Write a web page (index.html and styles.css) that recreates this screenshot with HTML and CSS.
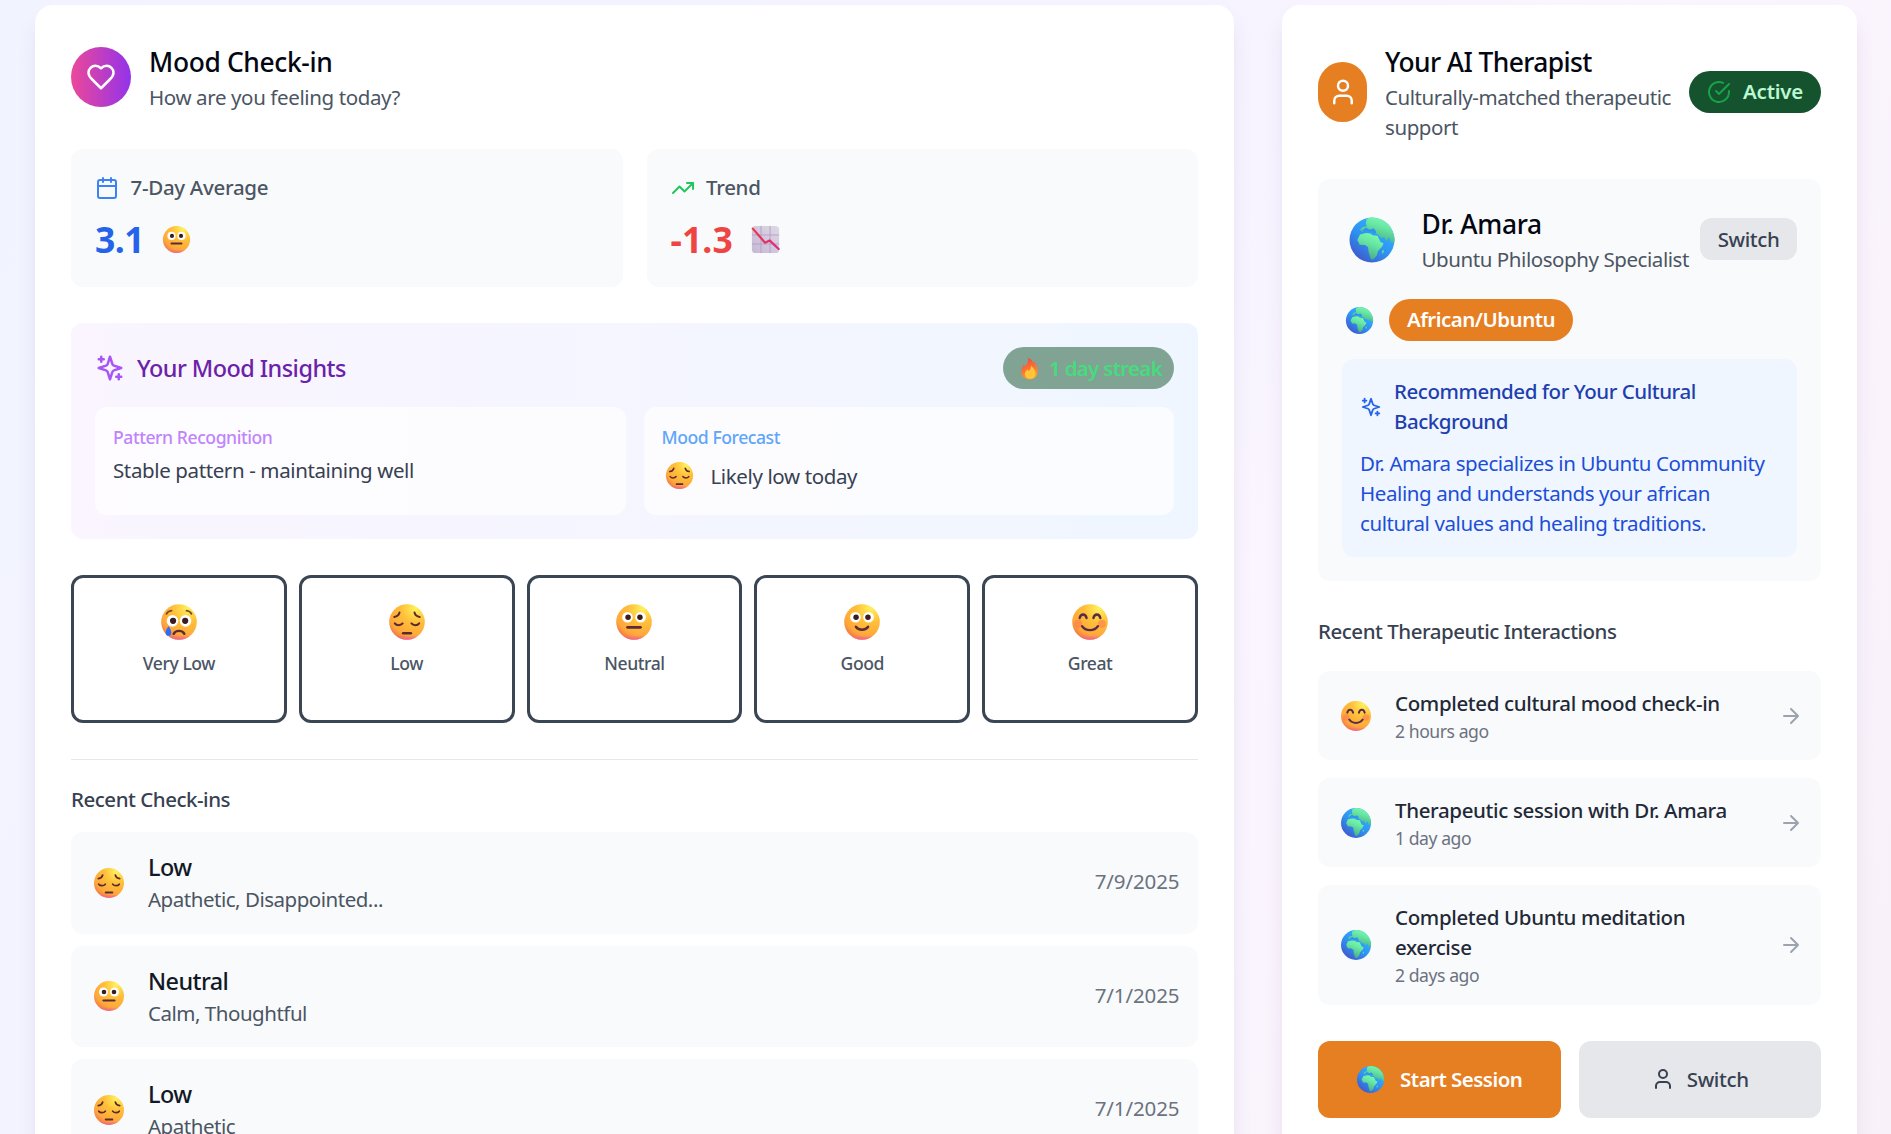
FILE: index.html
```html
<!DOCTYPE html>
<html lang="en">
<head>
<meta charset="utf-8">
<title>Mood Check-in</title>
<link rel="stylesheet" href="styles.css">
</head>
<body>
<svg class="defs" aria-hidden="true">
  <defs>
    <radialGradient id="skin" cx=".74" cy=".12" r=".98">
      <stop offset="0" stop-color="#fff15c"/><stop offset=".4" stop-color="#ffc03a"/><stop offset=".8" stop-color="#ffa63a"/><stop offset="1" stop-color="#ee6f4a"/>
    </radialGradient>
    <linearGradient id="chin" x1="0" y1="0" x2="0" y2="1">
      <stop offset=".87" stop-color="#f0609e" stop-opacity="0"/><stop offset="1" stop-color="#f0609e" stop-opacity=".85"/>
    </linearGradient>
    <linearGradient id="sea" x1=".85" y1=".2" x2=".25" y2="1">
      <stop offset="0" stop-color="#2fb4ff"/><stop offset=".5" stop-color="#2f92f2"/><stop offset="1" stop-color="#3f58cc"/>
    </linearGradient>
    <linearGradient id="land" x1=".8" y1="0" x2=".4" y2="1">
      <stop offset="0" stop-color="#7dffab"/><stop offset=".4" stop-color="#68e8a4"/><stop offset="1" stop-color="#45a886"/>
    </linearGradient>
    <linearGradient id="flame" x1=".3" y1="0" x2=".6" y2="1">
      <stop offset="0" stop-color="#f4453c"/><stop offset=".6" stop-color="#fb7b35"/><stop offset="1" stop-color="#ff9d35"/>
    </linearGradient>
    <linearGradient id="paper" x1="1" y1="0" x2="0" y2="1">
      <stop offset="0" stop-color="#dfd8e6"/><stop offset="1" stop-color="#c6b8d6"/>
    </linearGradient>
    <linearGradient id="fall" x1="0" y1="0" x2="1" y2="1">
      <stop offset="0" stop-color="#f0384a"/><stop offset="1" stop-color="#dd2a80"/>
    </linearGradient>
    <clipPath id="globe-clip"><circle cx="16" cy="16" r="15"/></clipPath>
  </defs>
  <symbol id="face" viewBox="0 0 32 32"><circle cx="16" cy="16" r="15" fill="url(#skin)"/><circle cx="16" cy="16" r="15" fill="url(#chin)"/></symbol>
  <symbol id="e-low" viewBox="0 0 32 32">
    <use href="#face"/>
    <g fill="none" stroke="#5a2b2e" stroke-width="1.7" stroke-linecap="round"><path d="M5.300 11.700c2.400-.3 3.900-1.700 4.400-3.700M26.700 11.700c-2.400-.3-3.900-1.700-4.400-3.700M5.700 17.200c1.500 2 5 2 6.600 0M19.700 17.200c1.600 2 5.100 2 6.600 0"/><path d="M12.700 25.500h6.600" stroke-width="2"/></g>
  </symbol>
  <symbol id="e-neutral" viewBox="0 0 32 32">
    <use href="#face"/>
    <circle cx="10.500" cy="12" r="4.500" fill="#fff"/><circle cx="21.500" cy="12" r="4.500" fill="#fff"/>
    <circle cx="11" cy="12" r="2.300" fill="#3a1b22"/><circle cx="21" cy="12" r="2.300" fill="#3a1b22"/>
    <path d="M10.500 20.500h11" stroke="#5a2b38" stroke-width="2.200" stroke-linecap="round"/>
  </symbol>
  <symbol id="e-good" viewBox="0 0 32 32">
    <use href="#face"/>
    <circle cx="10.500" cy="12" r="4.500" fill="#fff"/><circle cx="21.500" cy="12" r="4.500" fill="#fff"/>
    <circle cx="11" cy="12" r="2.300" fill="#3a1b22"/><circle cx="21" cy="12" r="2.300" fill="#3a1b22"/>
    <path d="M10.800 20c2.200 3.300 8.200 3.300 10.400 0" fill="none" stroke="#5a2b38" stroke-width="2" stroke-linecap="round"/>
  </symbol>
  <symbol id="e-great" viewBox="0 0 32 32">
    <use href="#face"/>
    <circle cx="6" cy="17.500" r="3.300" fill="#fb6f56" opacity=".5"/><circle cx="26" cy="17.500" r="3.300" fill="#fb6f56" opacity=".5"/>
    <path d="M7.300 12.700c.8-4 5-4 5.800 0M18.900 12.700c.8-4 5-4 5.800 0M9.300 19.500c3 4.500 10.400 4.500 13.400 0" fill="none" stroke="#5a2b48" stroke-width="2" stroke-linecap="round"/>
  </symbol>
  <symbol id="e-cry" viewBox="0 0 32 32">
    <use href="#face"/>
    <circle cx="10.500" cy="15" r="4.900" fill="#fff"/><circle cx="21.500" cy="15" r="4.900" fill="#fff"/>
    <circle cx="11" cy="15" r="2.600" fill="#3a1b22"/><circle cx="21.200" cy="15" r="2.600" fill="#3a1b22"/>
    <path d="M5.500 9.200c.8-1.600 2.300-2.500 4.200-2.700M26.500 9.200c-.8-1.600-2.300-2.500-4.200-2.700" fill="none" stroke="#7a4a2e" stroke-width="1.500" stroke-linecap="round"/>
    <path d="M11.500 26c1.600-3.300 7.400-3.300 9 0" fill="none" stroke="#5a2b38" stroke-width="2" stroke-linecap="round"/>
    <path d="M7.200 19.500c1.500 2 2.300 3.700 2.300 5.500a2.400 2.600 0 0 1-4.800 0c0-1.800 1-3.500 2.500-5.500z" fill="#2f6cf5"/>
  </symbol>
  <symbol id="e-globe" viewBox="0 0 32 32">
    <circle cx="16" cy="16" r="15" fill="url(#sea)"/>
    <g clip-path="url(#globe-clip)" fill="url(#land)">
      <path d="M12.500 2 17 0l7 1.200 5 4.800 3 6v6l-3.300-.5-1.300-3.300-1.700 2.600-1.700-2.600-2 .4-2.200-2.500-3.300-.9-.5-1.700-2.500-.3-1.500 1.300-2.500-.2L8 9.300l1.500-1.800 3-.7-.6-2z"/>
      <path d="M8 12.300 12 11.400l3 .3 1.500 1.200 3.200.3 2 4.200 2 .8-.9 2.200-2.800 3-.8 3-2.400 2.600-1.600-.2-1.500-5-.3-3-2-1.400-3.600-.2L6.200 16z"/>
      <path d="M22.700 23.300l1.100-.8-.2 2.300-1.100.8z"/>
    </g>
    <path d="M9.500 9.500l2.500-1.800 2.500 1.500 2.500-1 1.500 1.700.3 1.800-2-.3-.8-1.200-1.400.7-2.500-.7-1 .9z" fill="#2f93f0"/>
  </symbol>
  <symbol id="e-fire" viewBox="0 0 32 32">
    <path d="M14 1c5 2 6.500 5 7.300 8 .6-1 .8-1.800.8-3 4 4 5.400 9.500 5.400 14 0 6.500-4.500 11-11.300 11S4.500 26.500 4.500 20.500C4.500 16 7 14 8 10c1 .8 1.500 1.800 1.700 3C13 10 15 6 14 1z" fill="url(#flame)"/>
    <path d="M18 12c4.500 4 6.500 7 6.500 11 0 4.500-3 7.300-7.500 7.300S9.500 27.500 9.500 24c0-3.500 2.500-4.500 3.500-7 .8.700 1.200 1.500 1.400 2.500C17 18 18.300 15.500 18 12z" fill="#ffc637"/>
  </symbol>
  <symbol id="e-chart" viewBox="0 0 32 32">
    <rect x="1" y="1" width="30" height="30" rx="4" fill="url(#paper)"/>
    <path d="M11 1v30M21 1v30M1 11h30M1 21h30" stroke="#b0a2c2" stroke-width="1"/>
    <path d="M2 4l13.500 15.500 5-2.500L30.500 26.500" fill="none" stroke="url(#fall)" stroke-width="2.500" stroke-linecap="round" stroke-linejoin="round"/>
  </symbol>
  <symbol id="i-heart" viewBox="0 0 24 24"><path d="M19 14c1.490-1.460 3-3.210 3-5.500A5.500 5.500 0 0 0 16.500 3c-1.760 0-3 .5-4.500 2-1.500-1.500-2.740-2-4.500-2A5.500 5.500 0 0 0 2 8.500c0 2.300 1.500 4.050 3 5.500l7 7Z"/></symbol>
  <symbol id="i-calendar" viewBox="0 0 24 24"><rect x="3" y="4" width="18" height="18" rx="2"/><path d="M8 2v4M16 2v4M3 10h18"/></symbol>
  <symbol id="i-trend" viewBox="0 0 24 24"><path d="M22 7l-8.500 8.500-5-5L2 17"/><path d="M16 7h6v6"/></symbol>
  <symbol id="i-sparkles" viewBox="0 0 24 24"><path d="m12 3-1.912 5.813a2 2 0 0 1-1.275 1.275L3 12l5.813 1.912a2 2 0 0 1 1.275 1.275L12 21l1.912-5.813a2 2 0 0 1 1.275-1.275L21 12l-5.813-1.912a2 2 0 0 1-1.275-1.275L12 3Z"/><path d="M5 3v4M19 17v4M3 5h4M17 19h4"/></symbol>
  <symbol id="i-user" viewBox="0 0 24 24"><path d="M19 21v-2a4 4 0 0 0-4-4H9a4 4 0 0 0-4 4v2"/><circle cx="12" cy="7" r="4"/></symbol>
  <symbol id="i-check" viewBox="0 0 24 24"><path d="M22 11.080V12a10 10 0 1 1-5.930-9.140"/><path d="M22 4 12 14.010l-3-3"/></symbol>
  <symbol id="i-arrow" viewBox="0 0 24 24"><path d="M5 12h14M12 5l7 7-7 7"/></symbol>
</svg>

<main class="board">
  <section class="card">
    <header class="card-head">
      <span class="avatar avatar-mood"><svg class="icon icon-lg"><use href="#i-heart"/></svg></span>
      <div class="head-text">
        <h2 class="title">Mood Check-in</h2>
        <p class="subtitle">How are you feeling today?</p>
      </div>
    </header>

    <div class="stats">
      <div class="stat">
        <div class="stat-label"><svg class="icon blue"><use href="#i-calendar"/></svg>7-Day Average</div>
        <div class="stat-value value-blue"><span>3.1</span><svg class="emoji emoji-md"><use href="#e-neutral"/></svg></div>
      </div>
      <div class="stat">
        <div class="stat-label"><svg class="icon green"><use href="#i-trend"/></svg>Trend</div>
        <div class="stat-value value-red"><span>-1.3</span><svg class="emoji emoji-md"><use href="#e-chart"/></svg></div>
      </div>
    </div>

    <div class="insights">
      <div class="insights-head">
        <h3 class="insights-title"><svg class="icon icon-lg violet"><use href="#i-sparkles"/></svg>Your Mood Insights</h3>
        <span class="streak"><svg class="emoji emoji-fire"><use href="#e-fire"/></svg>1 day streak</span>
      </div>
      <div class="insight-grid">
        <div class="insight">
          <div class="insight-label lilac">Pattern Recognition</div>
          <div class="insight-text">Stable pattern - maintaining well</div>
        </div>
        <div class="insight">
          <div class="insight-label sky">Mood Forecast</div>
          <div class="insight-text forecast"><svg class="emoji emoji-md"><use href="#e-low"/></svg>Likely low today</div>
        </div>
      </div>
    </div>

    <div class="moods">
      <button class="mood"><svg class="emoji emoji-lg"><use href="#e-cry"/></svg>Very Low</button>
      <button class="mood"><svg class="emoji emoji-lg"><use href="#e-low"/></svg>Low</button>
      <button class="mood"><svg class="emoji emoji-lg"><use href="#e-neutral"/></svg>Neutral</button>
      <button class="mood"><svg class="emoji emoji-lg"><use href="#e-good"/></svg>Good</button>
      <button class="mood"><svg class="emoji emoji-lg"><use href="#e-great"/></svg>Great</button>
    </div>

    <div class="history">
      <h3 class="section-title">Recent Check-ins</h3>
      <ul class="entries">
        <li class="entry"><svg class="emoji emoji-row"><use href="#e-low"/></svg><div class="entry-body"><div class="entry-name">Low</div><div class="entry-note">Apathetic, Disappointed...</div></div><time class="entry-date">7/9/2025</time></li>
        <li class="entry"><svg class="emoji emoji-row"><use href="#e-neutral"/></svg><div class="entry-body"><div class="entry-name">Neutral</div><div class="entry-note">Calm, Thoughtful</div></div><time class="entry-date">7/1/2025</time></li>
        <li class="entry"><svg class="emoji emoji-row"><use href="#e-low"/></svg><div class="entry-body"><div class="entry-name">Low</div><div class="entry-note">Apathetic</div></div><time class="entry-date">7/1/2025</time></li>
      </ul>
    </div>
  </section>

  <section class="card">
    <header class="card-head">
      <span class="avatar avatar-therapist"><svg class="icon icon-lg"><use href="#i-user"/></svg></span>
      <div class="head-text">
        <h2 class="title title-therapist">Your AI Therapist</h2>
        <p class="subtitle tight">Culturally-matched therapeutic support</p>
      </div>
      <span class="active"><svg class="icon"><use href="#i-check"/></svg><span class="lift">Active</span></span>
    </header>

    <div class="therapist">
      <div class="doctor">
        <svg class="emoji emoji-xl"><use href="#e-globe"/></svg>
        <div class="head-text">
          <h3 class="title">Dr. Amara</h3>
          <p class="subtitle tight">Ubuntu Philosophy Specialist</p>
        </div>
        <button class="switch-sm">Switch</button>
      </div>
      <div class="culture"><svg class="emoji emoji-md"><use href="#e-globe"/></svg><span class="culture-tag">African/Ubuntu</span></div>
      <div class="recommend">
        <div class="recommend-head"><svg class="icon icon-sm"><use href="#i-sparkles"/></svg><span class="lift">Recommended for Your Cultural Background</span></div>
        <p class="recommend-text">Dr. Amara specializes in Ubuntu Community Healing and understands your african cultural values and healing traditions.</p>
      </div>
    </div>

    <h3 class="section-title interactions-title">Recent Therapeutic Interactions</h3>
    <ul class="interactions">
      <li class="interaction"><svg class="emoji emoji-row"><use href="#e-great"/></svg><div class="interaction-body"><div class="interaction-name">Completed cultural mood check-in</div><div class="interaction-time">2 hours ago</div></div><svg class="icon grey"><use href="#i-arrow"/></svg></li>
      <li class="interaction"><svg class="emoji emoji-row"><use href="#e-globe"/></svg><div class="interaction-body"><div class="interaction-name">Therapeutic session with Dr. Amara</div><div class="interaction-time">1 day ago</div></div><svg class="icon grey"><use href="#i-arrow"/></svg></li>
      <li class="interaction"><svg class="emoji emoji-row"><use href="#e-globe"/></svg><div class="interaction-body"><div class="interaction-name">Completed Ubuntu meditation exercise</div><div class="interaction-time">2 days ago</div></div><svg class="icon grey"><use href="#i-arrow"/></svg></li>
    </ul>

    <div class="actions">
      <button class="action action-start"><svg class="emoji emoji-md"><use href="#e-globe"/></svg>Start Session</button>
      <button class="action action-switch"><svg class="icon"><use href="#i-user"/></svg>Switch</button>
    </div>
  </section>
</main>
</body>
</html>
```
FILE: styles.css
```css
* { box-sizing: border-box; margin: 0; padding: 0; }

body {
  height: 1134px;
  overflow: hidden;
  font: 400 20.5px/30px "Noto Sans", "Open Sans", sans-serif;
  letter-spacing: -0.38px;
  color: #374151;
  background: linear-gradient(120deg, #f1f4ff 0%, #f5f3ff 45%, #faf5ff 62%, #f9f1f9 100%);
}

button { font: inherit; letter-spacing: inherit; color: inherit; border: 0; }
ul { list-style: none; }
.defs { position: absolute; width: 0; height: 0; }

.board {
  display: grid;
  grid-template-columns: 1199px 575px;
  gap: 48px;
  height: 1134px;
  overflow: hidden;
  padding: 5px 34px 0 35px;
}

.card {
  height: 1260px;
  padding: 36px;
  border-radius: 18px;
  background: #fff;
  box-shadow: 0 15px 23px -4px rgba(60, 30, 110, .1), 0 6px 9px -6px rgba(60, 30, 110, .1);
}

/* icons */
.icon {
  flex: none;
  width: 24px;
  height: 24px;
  fill: none;
  stroke: currentColor;
  stroke-width: 2;
  stroke-linecap: round;
  stroke-linejoin: round;
}
.icon-lg { width: 30px; height: 30px; }
.icon-sm { width: 22px; height: 24px; }
.blue { color: #3b82f6; }
.green { color: #22c55e; }
.violet { color: #a855f7; }
.grey { color: #9ca3af; }

.emoji { flex: none; display: block; }
.emoji-md { width: 29px; height: 29px; }
.emoji-row { width: 32px; height: 32px; }
.emoji-lg { width: 38px; height: 38px; }
.emoji-xl { width: 48px; height: 48px; }
.emoji-fire { width: 23px; height: 23px; }

.lift { margin: -1px 0 1px; }

/* card header */
.card-head { display: flex; align-items: center; gap: 18px; margin-bottom: 36px; }
.head-text { flex: 1; min-width: 0; }
.title { font-size: 26.4px; line-height: 42px; font-weight: 550; letter-spacing: -0.35px; color: #030712; }
.title-therapist { letter-spacing: -0.6px; }
.subtitle { margin: -1px 0 1px; color: #4b5563; }
.tight { letter-spacing: -0.43px; }

.avatar { display: flex; align-items: center; justify-content: center; flex: none; width: 60px; height: 60px; border-radius: 30px; color: #fff; }
.avatar-mood { background: linear-gradient(90deg, #ec4899, #9333ea); }
.avatar-therapist { width: 49px; background: #e67e22; }

.active {
  display: flex;
  align-items: center;
  gap: 12px;
  height: 42px;
  padding: 0 18px;
  border-radius: 21px;
  background: #14532d;
  color: #bbf7d0;
  font-weight: 600;
  letter-spacing: -0.25px;
}
.active .icon { color: #16a34a; }

/* stats */
.stats { display: grid; grid-template-columns: 1fr 1fr; gap: 24px; }
.stat { padding: 24px; border-radius: 12px; background: #f9fafb; }
.stat-label { display: flex; align-items: center; gap: 11.5px; margin-bottom: 12px; font-weight: 550; letter-spacing: -0.3px; line-height: 29px; padding-bottom: 1px; color: #4b5563; }
.stat-value { display: flex; align-items: center; gap: 18px; height: 48px; font-size: 35.5px; line-height: 48px; font-weight: 700; letter-spacing: -0.5px; }
.stat-value .emoji { margin-top: 1px; }
.value-blue { color: #2563eb; }
.value-red { color: #ef4444; letter-spacing: 0.1px; }

/* insights */
.insights { margin-top: 36px; padding: 24px 24px 24.5px; border-radius: 12px; background: linear-gradient(90deg, #faf5ff, #eff6ff); }
.insights-head { display: flex; align-items: center; justify-content: space-between; margin-bottom: 18px; }
.insights-title { display: flex; align-items: center; gap: 12px; font-size: 23.4px; line-height: 36px; font-weight: 550; letter-spacing: -0.52px; color: #6b21a8; }
.streak { display: flex; align-items: center; gap: 8px; height: 42px; padding: 0 12px 0 15px; border-radius: 21px; background: #80a394; color: #46dc7d; font-weight: 600; line-height: 40px; letter-spacing: -0.7px; }
.insight-grid { display: grid; grid-template-columns: 1fr 1fr; gap: 18px; }
.insight { height: 107.5px; padding: 18px; border-radius: 12px; background: rgba(255, 255, 255, .7); }
.insight-label { margin-bottom: 5.5px; font-size: 17.6px; line-height: 24px; font-weight: 550; letter-spacing: -0.45px; }
.lilac { color: #c084fc; }
.sky { color: #60a5fa; }
.forecast { display: flex; align-items: center; gap: 17px; height: 42px; padding-left: 3px; }

/* mood buttons */
.moods { display: grid; grid-template-columns: repeat(5, 1fr); gap: 12px; margin-top: 36px; }
.mood {
  display: flex;
  flex-direction: column;
  align-items: center;
  gap: 9.5px;
  height: 148px;
  padding-top: 25px;
  border: 3px solid #3b4655;
  border-radius: 12px;
  background: #fff;
  color: #4b5563;
  font-size: 17.6px;
  line-height: 24px;
  font-weight: 550;
  letter-spacing: -0.45px;
}

/* history */
.history { margin-top: 36px; padding-top: 24px; border-top: 1.5px solid #e5e7eb; }
.section-title { font-size: 20.5px; line-height: 30px; font-weight: 550; letter-spacing: -0.48px; color: #374151; }
.entries { display: grid; gap: 12px; margin-top: 18px; }
.entry { display: flex; align-items: center; height: 101.5px; padding: 0 18.5px 0 22px; border-radius: 12px; background: #f9fafb; }
.entry-body { flex: 1; padding-left: 23px; }
.entry-name { font-size: 23.4px; line-height: 35px; font-weight: 550; letter-spacing: -0.58px; color: #111827; }
.entry-note { margin: -1px 0 1px; letter-spacing: -0.48px; color: #4b5563; }
.entry-date { margin: -2px 0 1px; letter-spacing: -0.1px; color: #6b7280; }

/* therapist */
.therapist { padding: 24px; border-radius: 12px; background: #f9fafb; }
.doctor { display: flex; align-items: center; }
.doctor .emoji { margin: 2px 25.5px 0 6px; }
.doctor .subtitle { white-space: nowrap; }
.switch-sm { height: 42px; margin-top: -1px; padding: 0 17.5px; border-radius: 12px; background: #e5e7eb; font-weight: 550; line-height: 40px; }
.culture { display: flex; align-items: center; gap: 15px; margin: 24px 0 18px; padding-left: 3px; }
.culture-tag { height: 42px; padding: 0 18px; border-radius: 21px; background: #e67e22; color: #fff; font-weight: 600; line-height: 40px; letter-spacing: -0.52px; }
.recommend { padding: 18px; border-radius: 12px; background: #eff6ff; }
.recommend-head { display: flex; align-items: center; gap: 12px; margin-bottom: 11.5px; font-weight: 550; letter-spacing: -0.46px; color: #1e40af; }
.recommend-head .icon { color: #2563eb; }
.recommend-text { margin: -1px 0 1px; letter-spacing: -0.4px; color: #1d4ed8; }

/* interactions */
.interactions-title { margin: 35px 0 25.5px; }
.interactions { display: grid; gap: 18px; }
.interaction { display: flex; align-items: center; padding: 17.6px 18px 17.6px 21.5px; border-radius: 12px; background: #f9fafb; }
.interaction .emoji { margin-top: 1px; }
.interaction-body { flex: 1; padding: 0 20px 0 23.5px; }
.interaction-name { margin-top: -.5px; font-weight: 550; letter-spacing: -0.36px; color: #1f2937; }
.interaction-time { padding-top: .5px; font-size: 17.6px; line-height: 24px; letter-spacing: -0.45px; color: #6b7280; }

/* actions */
.actions { display: grid; grid-template-columns: 1fr 1fr; gap: 18px; margin-top: 36px; }
.action { display: flex; align-items: center; justify-content: center; height: 77.5px; border-radius: 12px; }
.action-start { gap: 15px; background: #e67e22; color: #fff; font-weight: 600; letter-spacing: -0.53px; }
.action-switch { gap: 12px; background: #e5e7eb; font-weight: 550; }
```
